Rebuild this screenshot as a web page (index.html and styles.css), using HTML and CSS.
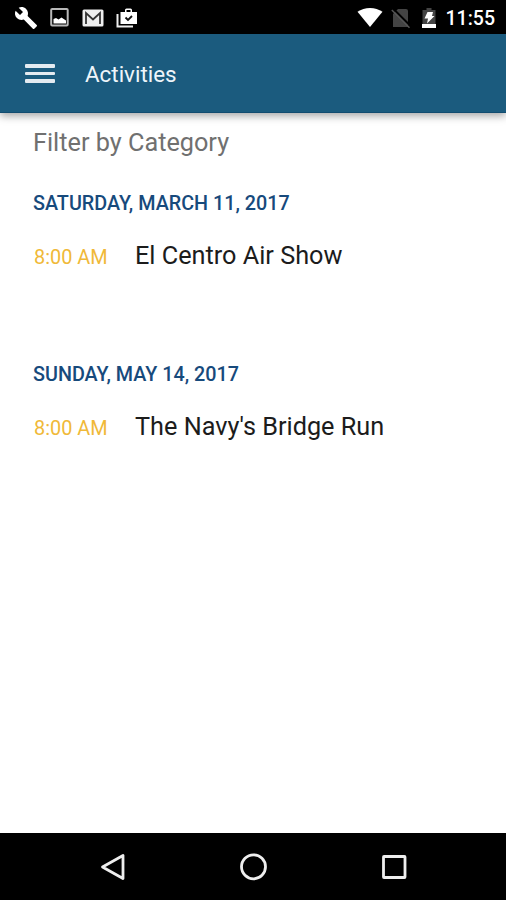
FILE: index.html
```html
<!DOCTYPE html>
<html lang="en">
<head>
	<meta charset="UTF-8">
	<title>Activities</title>
	<link rel="stylesheet" href="styles.css">
</head>
<body>
	<div class="statusbar">
		<div class="notifications">
			<svg width="24" height="24" viewBox="0 0 24 24"><path fill="#fff" d="M22.700 19l-9.100-9.100c.9-2.300.4-5-1.500-6.900-2-2-5-2.400-7.400-1.300L9 6 6 9 1.600 4.700C.4 7.100.9 10.100 2.900 12.100c1.900 1.900 4.600 2.400 6.900 1.500l9.100 9.100c.4.4 1 .4 1.400 0l2.300-2.300c.5-.4.5-1.100.1-1.400z"/></svg>
			<svg width="20" height="20" viewBox="0 0 20 20"><rect x="1.200" y="1" width="16.500" height="16.500" rx="1" fill="none" stroke="#b8b8b8" stroke-width="2"/><path fill="#fff" d="M3.500 15.500v-4.500l2.500-1 2.500 1.500 3-2 4.500 3V15.500z"/></svg>
			<svg width="22" height="18" viewBox="0 0 22 18"><rect x=".5" y=".5" width="21" height="17" rx="1.500" fill="#eee"/><path fill="none" stroke="#333" stroke-width="1.800" d="M4 15V4l7 6.500L18 4v11"/></svg>
			<svg width="22" height="20" viewBox="0 0 22 20"><path fill="none" stroke="#eee" stroke-width="2" d="M1.500 6v12.500H17"/><path fill="#fff" d="M4.500 4H9V2q0-1.500 1.500-1.500h4Q16 .5 16 2v2h5v12H4.500zM10.500 4h4V2h-4z"/><path fill="none" stroke="#111" stroke-width="1.800" d="M9.500 9.500l2.500 2.500L16 8"/></svg>
		</div>
		<div class="system">
			<svg class="wifi" width="26" height="20" viewBox="0 0 26 20"><path fill="#fff" d="M13 19L.5 3.800Q6 0 13 0t12.500 3.800z"/></svg>
			<svg class="sim" width="20" height="21" viewBox="0 0 20 21"><path fill="#444" d="M7 1h8q2 0 2 2v16H2V6z"/><path stroke="#000" stroke-width="2" d="M2 .5L20 18.500"/><path stroke="#555" stroke-width="1.500" d="M.8 2L18.500 19.700"/></svg>
			<svg class="battery" width="16" height="20" viewBox="0 0 16 20"><path fill="#444" d="M1.500 2h4V0h5v2h4v18h-13z"/><path fill="#fff" d="M1 16h14v4H1zM6.500 4h5.500l-1 4h2.500L6 15.500l1-5H3.500z"/></svg>
			<span class="clock">11:55</span>
		</div>
	</div>
	<header class="appbar">
		<div class="menu"><span></span><span></span><span></span></div>
		<h1>Activities</h1>
	</header>
	<main class="content">
		<div class="filter">Filter by Category</div>
		<section class="day">
			<h2>SATURDAY, MARCH 11, 2017</h2>
			<div class="event">
				<span class="time">8:00 AM</span>
				<span class="name">El Centro Air Show</span>
			</div>
		</section>
		<section class="day">
			<h2>SUNDAY, MAY 14, 2017</h2>
			<div class="event">
				<span class="time">8:00 AM</span>
				<span class="name">The Navy's Bridge Run</span>
			</div>
		</section>
	</main>
	<nav class="navbar">
		<svg width="28" height="28" viewBox="0 0 28 28"><path d="M3.500 14L24 2.500v23z"/></svg>
		<svg width="28" height="28" viewBox="0 0 28 28"><circle cx="13.500" cy="13.800" r="12"/></svg>
		<svg width="28" height="28" viewBox="0 0 28 28"><rect x="3.500" y="3.500" width="21.500" height="21" rx=".5"/></svg>
	</nav>
</body>
</html>
```
FILE: styles.css
```css
* {
	box-sizing: border-box;
}
body {
	margin: 0;
	height: 900px;
	display: flex;
	flex-direction: column;
	background-color: #fff;
	font-family: Roboto, sans-serif;
	white-space: nowrap;
	overflow: hidden;
}
svg {
	display: block;
	flex: none;
}
.statusbar {
	height: 34px;
	padding: 2px 11px 0 14px;
	background-color: #000;
	display: flex;
	justify-content: space-between;
	align-items: center;
}
.notifications {
	display: flex;
	align-items: center;
	gap: 12px;
}
.system {
	display: flex;
	align-items: center;
}
.sim {
	margin-left: 8px;
}
.battery {
	margin-left: 10px;
}
.clock {
	margin-left: 9px;
	padding-top: 2px;
	color: #fff;
	font-size: 19.500px;
	font-weight: 500;
	line-height: 24px;
}
.appbar {
	height: 79px;
	padding: 1px 25px 0;
	display: flex;
	align-items: center;
	background-color: #1b5b7e;
	border-bottom: 1px solid #124c70;
	box-shadow: 0 3px 8px rgba(0, 0, 0, 0.35);
}
.menu {
	width: 30px;
	display: flex;
	flex-direction: column;
	gap: 4px;
}
.menu span {
	height: 4px;
	border-radius: 1px;
	background-color: #e4ebf1;
}
.menu span:nth-child(2) {
	height: 3px;
}
.appbar h1 {
	margin: 1px 0 0 30px;
	color: #eef5fa;
	font-size: 22.400px;
	font-weight: 400;
	line-height: 28px;
}
.content {
	flex: 1;
	padding: 14px 33px 0;
}
.filter {
	color: #707070;
	font-size: 25.250px;
	line-height: 32px;
}
.day {
	height: 171px;
	padding-top: 32px;
}
.day h2 {
	margin: 0;
	color: #174a7c;
	font-size: 19.750px;
	font-weight: 500;
	line-height: 26px;
}
.event {
	margin-top: 22px;
	padding-left: 1px;
	display: flex;
	align-items: baseline;
}
.time {
	width: 101px;
	color: #f0b938;
	font-size: 19.900px;
}
.name {
	color: #1c1c1c;
	font-size: 25.250px;
	line-height: 34px;
}
.navbar {
	height: 67px;
	padding: 0 98px 0 99px;
	display: flex;
	justify-content: space-between;
	align-items: center;
	background-color: #000;
}
.navbar svg {
	fill: none;
	stroke: #eee;
	stroke-width: 2.800;
	stroke-linejoin: round;
}
```
